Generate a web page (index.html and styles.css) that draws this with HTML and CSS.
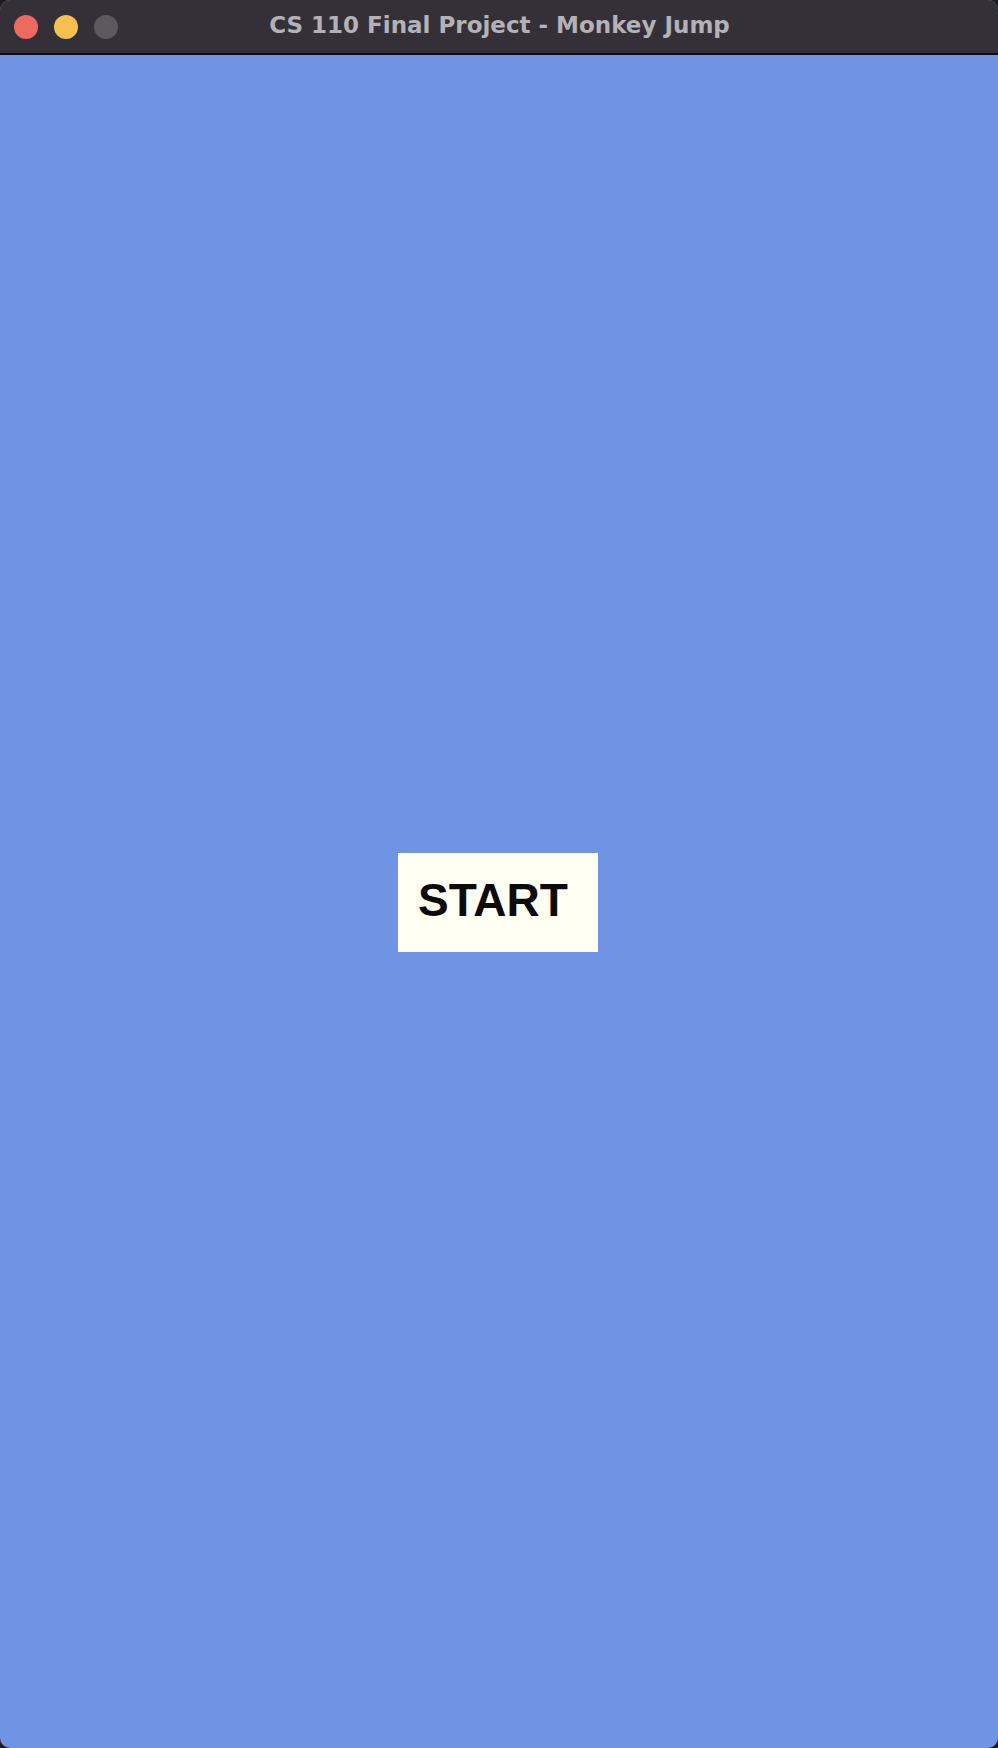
FILE: index.html
```html
<!DOCTYPE html>
<html lang="en">
<head>
<meta charset="utf-8">
<title>CS 110 Final Project - Monkey Jump</title>
<link rel="stylesheet" href="styles.css">
</head>
<body>
<div class="window">
  <header class="titlebar">
    <div class="lights">
      <span class="light red"></span>
      <span class="light yellow"></span>
      <span class="light gray"></span>
    </div>
    <div class="title">CS 110 Final Project - Monkey Jump</div>
  </header>
  <main class="stage">
    <button class="start">START</button>
  </main>
</div>
</body>
</html>
```
FILE: styles.css
```css
html, body {
  margin: 0;
  padding: 0;
  height: 100%;
}
body {
  background: #1c1c1e;
}
.window {
  width: 998px;
  height: 1748px;
  display: flex;
  flex-direction: column;
  border-radius: 10px;
  overflow: hidden;
  background: #6f94e4;
}
.titlebar {
  height: 53px;
  flex: 0 0 53px;
  background: #333137;
  border-bottom: 2px solid #0e0e10;
  display: flex;
  align-items: center;
  position: relative;
}
.lights {
  display: flex;
  gap: 16px;
  padding-left: 14px;
  position: relative;
  z-index: 1;
}
.light {
  width: 24px;
  height: 24px;
  border-radius: 50%;
  display: block;
}
.red { background: #ee6a5e; }
.yellow { background: #f6c050; }
.gray { background: #5b595e; }
.title {
  position: absolute;
  left: 0;
  right: 0;
  top: 0;
  bottom: 0;
  display: flex;
  align-items: center;
  justify-content: center;
  font-family: "DejaVu Sans", "Liberation Sans", sans-serif;
  font-weight: bold;
  font-size: 23px;
  color: #b4b2b7;
  padding-left: 1px;
  padding-bottom: 3px;
}
.stage {
  flex: 1;
  display: flex;
  align-items: center;
  justify-content: center;
  padding-top: 2px;
}
.start {
  width: 200px;
  height: 99px;
  box-sizing: border-box;
  border: none;
  margin: 0;
  background: #fffff2;
  display: flex;
  align-items: center;
  justify-content: flex-start;
  padding: 0 0 6px 20px;
  font-family: "Liberation Sans", Arial, sans-serif;
  font-weight: bold;
  font-size: 46px;
  line-height: 46px;
  color: #0b0b0b;
  margin-left: -2px;
}
```
